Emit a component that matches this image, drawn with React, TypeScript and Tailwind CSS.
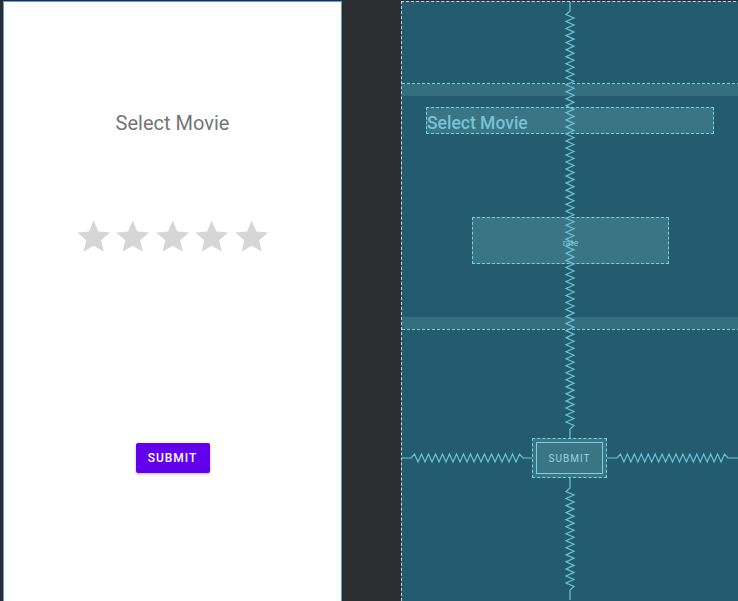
import React from "react"

const STAR = "M12 17.27L18.18 21l-1.64-7.03L22 9.24l-7.19-.61L12 2 9.19 8.63 2 9.24l5.46 4.73L5.82 21z"

// builds a spring-like polyline between two points, straight lead-in/out
function zigzag(
  from: number,
  to: number,
  fixed: number,
  vertical: boolean,
  lead = 8,
  period = 7,
  amp = 4,
) {
  const pts: [number, number][] = []
  const dir = to > from ? 1 : -1
  pts.push([from, 0])
  const zs = from + lead * dir
  const ze = to - lead * dir
  pts.push([zs, 0])
  const len = Math.abs(ze - zs)
  const steps = Math.max(2, Math.round(len / (period / 2)))
  for (let i = 1; i < steps; i++) {
    const t = zs + ((ze - zs) * i) / steps
    pts.push([t, i % 2 ? -amp : amp])
  }
  pts.push([ze, 0])
  pts.push([to, 0])
  return pts
    .map(([a, o]) => (vertical ? `${fixed + o},${a}` : `${a},${fixed + o}`))
    .join(" ")
}

function Stars() {
  return (
    <div className="flex h-[47px] w-[197px] items-start">
      {[0, 1, 2, 3, 4].map((i) => (
        <svg key={i} viewBox="0 0 24 24" className="h-[40px] w-[39.4px]" preserveAspectRatio="xMidYMid meet">
          <path d={STAR} fill="#d6d6d6" />
        </svg>
      ))}
    </div>
  )
}

function DesignPanel() {
  return (
    <div className="ml-[3px] mt-[1px] flex h-[620px] w-[339px] shrink-0 flex-col items-center border border-[#5a9cec] bg-white pt-[108px]">
      <div className="h-[27px] text-[20px] leading-[27px] text-[#757575]">Select Movie</div>
      <div className="mt-[80px]">
        <Stars />
      </div>
      <div className="mt-[174px] flex h-[40px] items-center">
        <button className="h-[30px] w-[74px] rounded-[2px] bg-[#6200ee] text-[12px] font-medium tracking-[1px] text-white shadow-[0_1px_3px_rgba(0,0,0,0.3)]">
          SUBMIT
        </button>
      </div>
    </div>
  )
}

function BlueprintPanel() {
  const line = "#6cc2d5"
  return (
    <div className="relative ml-[59px] mt-[1px] h-[620px] w-[340px] shrink-0 border border-dashed border-[#c9d6da] bg-[#235c6e]">
      <div className="h-[81px]" />
      <div className="flex h-[247px] flex-col border-y border-dashed border-[#7fcfe0]">
        <div className="h-[12px] bg-[#356e7e]" />
        <div className="mt-[11px] ml-[24px] flex h-[27px] w-[288px] items-end border border-dashed border-[#7fcfe0] bg-[#3a7585] pb-[1px] text-[17.5px] font-medium leading-none text-[#78c3d3]">
          Select Movie
        </div>
        <div className="mt-[83px] ml-[70px] flex h-[47px] w-[197px] items-center justify-center border border-dashed border-[#7fcfe0] bg-[#3a7585] pt-[7px] text-[9px] text-[#86c9d7]">
          rate
        </div>
        <div className="flex-1" />
        <div className="h-[12px] bg-[#356e7e]" />
      </div>
      <div className="mt-[108px] ml-[130px] h-[40px] w-[75px] border border-dashed border-[#7fcfe0] bg-[#3a7585] p-[3px]">
        <div className="flex h-full w-full items-center justify-center border border-[#7fcfe0] text-[10px] tracking-[1px] text-[#9ad3df]">
          SUBMIT
        </div>
      </div>
      <svg className="pointer-events-none absolute left-0 top-0" width="340" height="610">
        <g fill="none" stroke={line} strokeWidth="1.2">
          <polyline points={zigzag(0, 436, 168, true, 9)} />
          <polyline points={zigzag(476, 598, 168, true, 10)} />
          <polyline points={zigzag(0, 130, 456, false, 9)} />
          <polyline points={zigzag(205, 336, 456, false, 10)} />
        </g>
      </svg>
    </div>
  )
}

export default function App() {
  return (
    <div
      className="flex h-[601px] w-[738px] overflow-hidden bg-[#2c2d30]"
      style={{ fontFamily: "Roboto, 'Liberation Sans', sans-serif" }}
    >
      <DesignPanel />
      <BlueprintPanel />
    </div>
  )
}
